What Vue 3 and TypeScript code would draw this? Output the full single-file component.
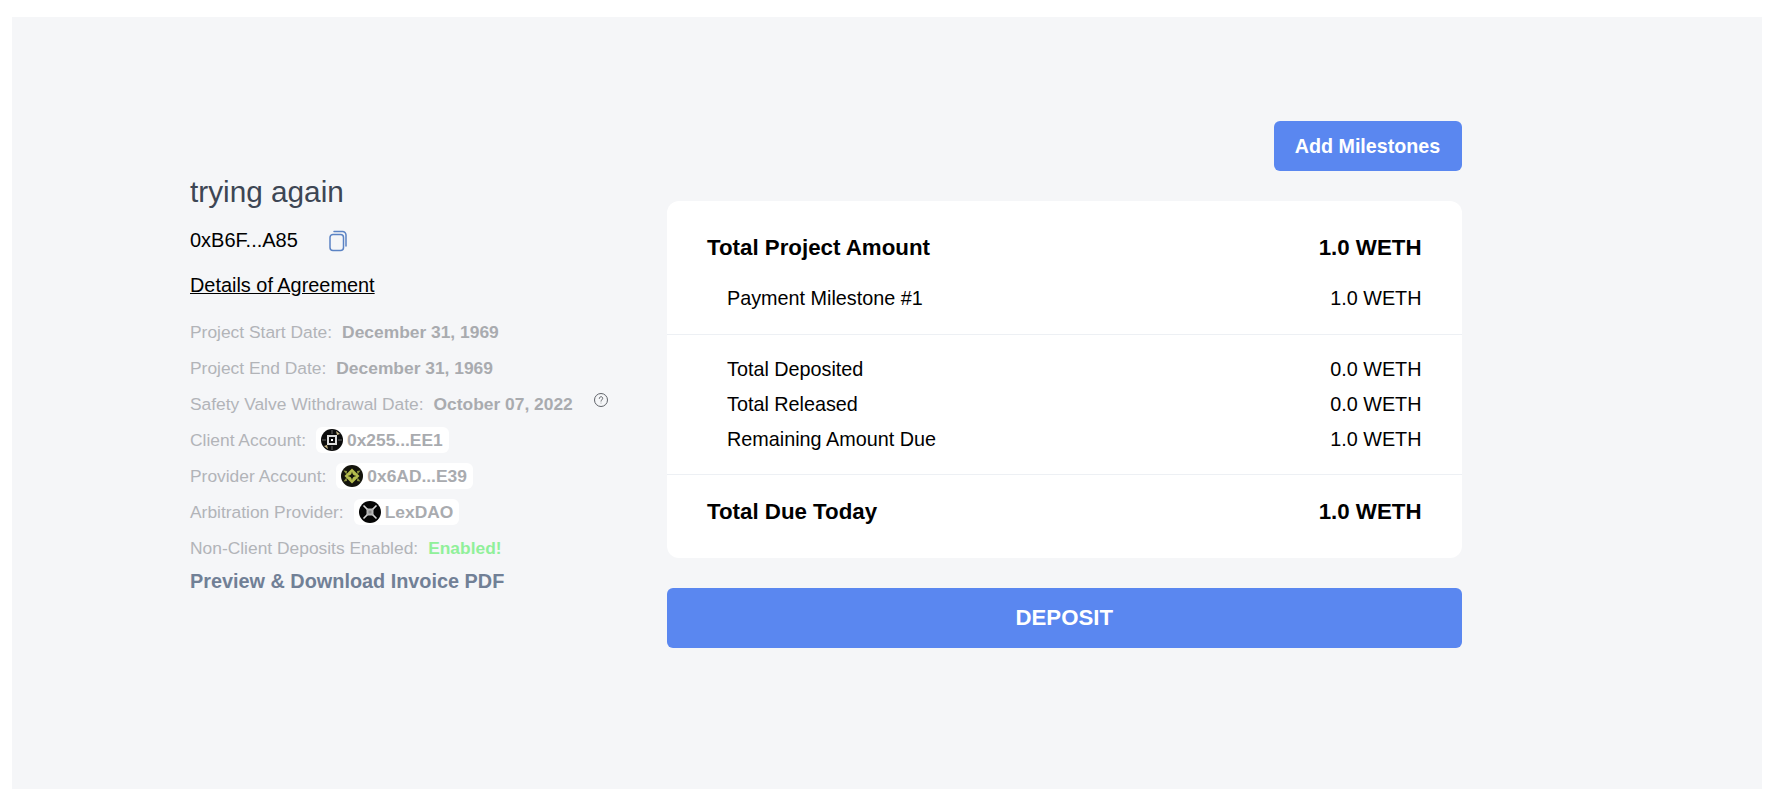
<script setup lang="ts">
const rows = [
  { label: 'Total Deposited', value: '0.0 WETH' },
  { label: 'Total Released', value: '0.0 WETH' },
  { label: 'Remaining Amount Due', value: '1.0 WETH' },
]
</script>

<template>
  <div class="page">
    <main class="panel">
      <section class="details">
        <h1 class="title">trying again</h1>
        <div class="address">
          <span>0xB6F...A85</span>
          <svg class="copy" width="20" height="22" viewBox="0 0 20 22" fill="none" stroke="#5b83c4" stroke-width="1.5">
            <rect x="2" y="4.500" width="13.500" height="16" rx="3" />
            <path d="M6 1.500h8.500a3.500 3.500 0 0 1 3.500 3.500v11" stroke-linecap="round" />
          </svg>
        </div>
        <a class="agreement">Details of Agreement</a>
        <ul class="facts">
          <li><span>Project Start Date:</span><b>December 31, 1969</b></li>
          <li><span>Project End Date:</span><b>December 31, 1969</b></li>
          <li>
            <span>Safety Valve Withdrawal Date:</span><b>October 07, 2022</b>
            <svg class="help" width="16" height="16" viewBox="0 0 16 16" fill="none" stroke="#5f6369" stroke-width="1">
              <circle cx="8" cy="8" r="6.500" />
              <path d="M6.300 6.400a1.700 1.700 0 1 1 2.600 1.400c-.6.400-.9.700-.9 1.300" stroke-linecap="round" />
              <circle cx="8" cy="11" r=".45" fill="#5f6369" stroke="none" />
            </svg>
          </li>
          <li>
            <span>Client Account:</span>
            <em class="chip">
              <svg class="avatar" viewBox="0 0 22 22">
                <circle cx="11" cy="11" r="11" fill="#0b0b0b" />
                <path d="M3 17l3-1 1 4zM19 5l-3 1-1-4z" fill="#c9b98a" />
                <rect x="6" y="6" width="10" height="10" fill="#dcdcdc" />
                <rect x="8" y="8" width="6" height="6" fill="#0b0b0b" />
                <rect x="10" y="10" width="2" height="2" fill="#fff" />
                <path d="M11 1v4M11 17v4M1 11h4M17 11h4" stroke="#666" stroke-width="1" />
              </svg>
              0x255...EE1
            </em>
          </li>
          <li>
            <span>Provider Account:</span>
            <em class="chip">
              <svg class="avatar" viewBox="0 0 22 22">
                <circle cx="11" cy="11" r="11" fill="#14140c" />
                <path d="M11 3.500l7.500 7.500-7.500 7.500-7.500-7.500z" fill="#b5bd4e" />
                <path d="M11 6.500c.4 3 1.500 4.100 4.500 4.500-3 .4-4.100 1.500-4.500 4.500-.4-3-1.500-4.100-4.500-4.500 3-.4 4.100-1.500 4.500-4.500z" fill="#14140c" />
                <path d="M2.500 5.500l3.500.5-.5 3.500zM19.500 5.500l-3.500.5.500 3.500zM2.500 16.500l3.500-.5-.5-3.500zM19.500 16.500l-3.500-.5.500-3.500z" fill="#8d9440" />
              </svg>
              0x6AD...E39
            </em>
          </li>
          <li>
            <span>Arbitration Provider:</span>
            <em class="chip">
              <svg class="avatar" viewBox="0 0 22 22">
                <circle cx="11" cy="11" r="11" fill="#050505" />
                <path d="M4.500 4.500l13 13M17.500 4.500l-13 13" stroke="#d8d8d8" stroke-width="1.600" />
                <rect x="7.500" y="7.500" width="7" height="7" fill="#b8b8b8" />
                <rect x="9.500" y="9.500" width="3" height="3" fill="#8f8f8f" />
              </svg>
              LexDAO
            </em>
          </li>
          <li><span>Non-Client Deposits Enabled:</span><b class="on">Enabled!</b></li>
        </ul>
        <a class="pdf">Preview &amp; Download Invoice PDF</a>
      </section>

      <section class="summary">
        <button class="add">Add Milestones</button>
        <div class="card">
          <div class="block top">
            <div class="row strong"><span>Total Project Amount</span><span>1.0 WETH</span></div>
            <div class="row sub milestone"><span>Payment Milestone #1</span><span>1.0 WETH</span></div>
          </div>
          <div class="block mid">
            <div v-for="r in rows" :key="r.label" class="row sub tight">
              <span>{{ r.label }}</span><span>{{ r.value }}</span>
            </div>
          </div>
          <div class="block end">
            <div class="row strong"><span>Total Due Today</span><span>1.0 WETH</span></div>
          </div>
        </div>
        <button class="deposit">DEPOSIT</button>
      </section>
    </main>
  </div>
</template>

<style>
html, body { margin: 0; background: #fff; }
</style>

<style scoped>
.page {
  width: 1780px;
  height: 802px;
  box-sizing: border-box;
  padding: 17px 18px 13px 12px;
  font-family: "Liberation Sans", Arial, sans-serif;
}
.panel {
  height: 100%;
  box-sizing: border-box;
  background: #f5f6f8;
  display: flex;
  align-items: flex-start;
  padding: 104px 0 0 178px;
}
.details { width: 477px; flex: none; padding-top: 51px; }
.title {
  margin: 0;
  font-size: 29.750px;
  line-height: 40px;
  font-weight: 400;
  color: #3d4654;
}
.address {
  display: flex;
  align-items: center;
  gap: 30px;
  margin-top: 15px;
  font-size: 20px;
  line-height: 26px;
  color: #000;
}
.copy { margin-top: 2px; }
.agreement {
  display: block;
  margin-top: 19px;
  font-size: 19.900px;
  line-height: 26px;
  color: #000;
  text-decoration: underline;
}
.facts { list-style: none; margin: 16px 0 0; padding: 0; }
.facts li {
  display: flex;
  align-items: center;
  height: 36px;
  font-size: 17.400px;
  color: #b2b4b8;
}
.facts b { margin-left: 10px; color: #a9abaf; font-weight: 700; }
.facts b.on { color: #90f09a; }
.help { margin: -8px 0 0 20px; }
.chip {
  display: inline-flex;
  align-items: center;
  gap: 4px;
  margin-left: 10px;
  height: 26px;
  padding: 0 6px 0 5px;
  background: #fff;
  border-radius: 6px;
  font-style: normal;
  font-weight: 700;
  color: #a9abaf;
}
.avatar { width: 22px; height: 22px; }
.pdf {
  display: block;
  margin-top: 1px;
  font-size: 19.850px;
  line-height: 28px;
  font-weight: 700;
  color: #718096;
}
.summary { width: 794.500px; flex: none; display: flex; flex-direction: column; align-items: stretch; }
.add {
  align-self: flex-end;
  width: 188px;
  height: 50px;
  padding: 0;
  border: 0;
  border-radius: 6px;
  background: #5a87f0;
  color: #fff;
  font: 700 19.700px "Liberation Sans", Arial, sans-serif;
}
.card {
  margin-top: 30px;
  height: 357px;
  box-sizing: border-box;
  background: #fff;
  border-radius: 12px;
  display: flex;
  flex-direction: column;
}
.block { padding: 0 40px; }
.top { height: 134px; padding-top: 29px; box-sizing: border-box; border-bottom: 1px solid #edf0f4; }
.mid { height: 140px; padding-top: 17px; box-sizing: border-box; border-bottom: 1px solid #edf0f4; }
.end { padding-top: 19px; }
.row { display: flex; justify-content: space-between; color: #000; }
.strong { font-size: 22.300px; line-height: 36px; font-weight: 700; }
.sub { font-size: 19.800px; padding-left: 20px; }
.milestone { line-height: 28px; margin-top: 18px; }
.tight { line-height: 34.800px; }
.deposit {
  margin-top: 30px;
  height: 60px;
  border: 0;
  border-radius: 6px;
  background: #5a87f0;
  color: #fff;
  font: 700 22.200px "Liberation Sans", Arial, sans-serif;
}
</style>
